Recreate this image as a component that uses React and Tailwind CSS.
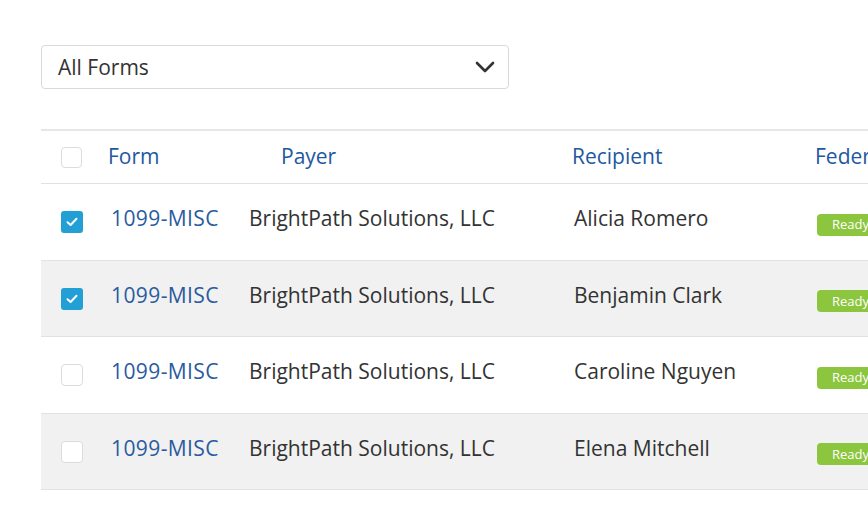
import React from "react";

const rows = [
  { checked: true, recipient: "Alicia Romero", grey: false, h: "h-[77px]" },
  { checked: true, recipient: "Benjamin Clark", grey: true, h: "h-[76px]" },
  { checked: false, recipient: "Caroline Nguyen", grey: false, h: "h-[77px]" },
  { checked: false, recipient: "Elena Mitchell", grey: true, h: "h-[76px]" },
];

function Checkbox({ checked }) {
  if (checked) {
    return (
      <div className="w-[22px] h-[22px] rounded-[3px] bg-[#229fd4] flex items-center justify-center">
        <svg width="12" height="10" viewBox="0 0 12 10" fill="none">
          <path d="M1.5 5.2 L4.6 8 L10.5 1.8" stroke="white" strokeWidth="2" strokeLinecap="round" strokeLinejoin="round" />
        </svg>
      </div>
    );
  }
  return <div className="w-[22px] h-[22px] rounded-[4px] bg-white border border-[#dcdcdc]" />;
}

export default function App() {
  return (
    <div
      className="w-[868px] h-[526px] bg-white overflow-hidden"
      style={{ fontFamily: '"Open Sans", "Noto Sans", sans-serif' }}
    >
      <div className="pt-[45px] pl-[41px]">
        <div className="w-[468px] h-[44px] border border-[#d9d9d9] rounded-[4px] flex items-center justify-between pl-[16px] pr-[12px]">
          <span className="text-[21px] text-[#333333] leading-none">All Forms</span>
          <svg width="20" height="12" viewBox="0 0 20 12" fill="none" className="mr-[1px]">
            <path d="M2 2 L10 10 L18 2" stroke="#333333" strokeWidth="2.6" strokeLinecap="round" strokeLinejoin="round" />
          </svg>
        </div>

        <div className="mt-[40px] w-[1000px] border-t-2 border-[#e6e6e6]">
          <div className="h-[53px] flex items-center border-b border-[#e2e2e2] text-[21px] text-[#22589f]">
            <div className="w-[67px] pl-[20px] flex items-center">
              <div className="w-[21px] h-[21px] rounded-[4px] bg-white border border-[#dcdcdc]" />
            </div>
            <div className="w-[141px]">Form</div>
            <div className="w-[323px] pl-[32px]">Payer</div>
            <div className="w-[243px]">Recipient</div>
            <div className="flex-1 whitespace-nowrap">Federal Status</div>
          </div>
          {rows.map((r, i) => (
            <div
              key={i}
              className={`${r.h} flex items-center border-b border-[#e2e2e2] text-[21px] ${r.grey ? "bg-[#f1f1f1]" : "bg-white"}`}
            >
              <div className="w-[67px] pl-[20px] flex items-center">
                <Checkbox checked={r.checked} />
              </div>
              <div className="w-[141px] pl-[3px] text-[#2a5aa0] pb-[6px] tracking-[0.4px]">1099-MISC</div>
              <div className="w-[323px] text-[#333333] pb-[6px]">BrightPath Solutions, LLC</div>
              <div className="w-[243px] pl-[2px] text-[#333333] pb-[6px]">{r.recipient}</div>
              <div className="flex-1 pl-[2px]">
                <span className="inline-flex items-center h-[22px] px-[15px] rounded-[4px] bg-[#8cc63e] text-white text-[13px] leading-none whitespace-nowrap">
                  Ready to file
                </span>
              </div>
            </div>
          ))}
        </div>
      </div>
    </div>
  );
}
